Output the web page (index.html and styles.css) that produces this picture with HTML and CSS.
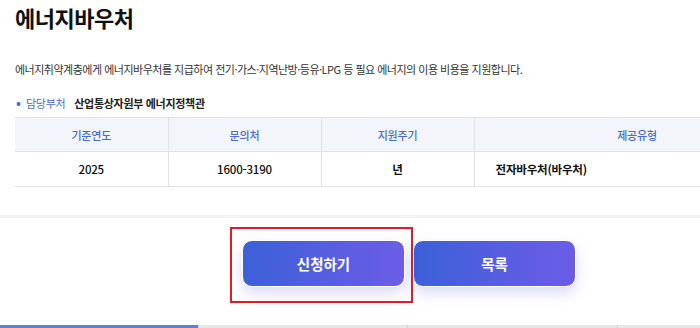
FILE: index.html
```html
<!DOCTYPE html>
<html lang="ko">
<head>
<meta charset="utf-8">
<link rel="stylesheet" href="styles.css">
</head>
<body>
<div class="page">
  <section class="intro">
    <h1 class="title">에너지바우처</h1>
    <p class="desc">에너지취약계층에게 에너지바우처를 지급하여 전기·가스·지역난방·등유·LPG 등 필요 에너지의 이용 비용을 지원합니다.</p>
    <div class="dept"><span class="dot">•</span><span class="dept-label">담당부처</span><span class="dept-name">산업통상자원부 에너지정책관</span></div>
    <div class="table-clip">
    <table class="info">
      <thead>
        <tr><th class="c1">기준연도</th><th class="c2">문의처</th><th class="c3">지원주기</th><th class="c4">제공유형</th></tr>
      </thead>
      <tbody>
        <tr><td>2025</td><td>1600-3190</td><td class="bold">년</td><td class="left bold">전자바우처(바우처)</td></tr>
      </tbody>
    </table>
    </div>
  </section>
  <div class="sep"></div>
  <div class="actions">
    <div class="btn-wrap">
      <button class="btn">신청하기</button>
      <span class="highlight"></span>
    </div>
    <button class="btn">목록</button>
  </div>
  <div class="tabs">
    <div class="tab active"></div>
    <div class="tab"></div>
    <div class="tab"></div>
    <div class="tab"></div>
  </div>
</div>
</body>
</html>
```

FILE: styles.css
```css
* { box-sizing: border-box; }
html, body { margin: 0; padding: 0; }
body {
  width: 700px;
  height: 328px;
  overflow: hidden;
  background: #fff;
  font-family: "Noto Sans CJK KR", "Noto Sans", sans-serif;
  color: #222;
}
.page { width: 700px; overflow: hidden; }
.intro { padding: 0 0 0 15px; }
.title {
  margin: 0;
  padding-top: 2px;
  font-size: 22px;
  line-height: 30px;
  font-weight: 700;
  color: #111;
  letter-spacing: -0.5px;
}
.desc {
  margin: 29px 0 0 0;
  font-size: 11px;
  line-height: 16px;
  color: #333;
  letter-spacing: -0.5px;
  white-space: nowrap;
}
.dept {
  margin-top: 18px;
  display: flex;
  align-items: center;
  font-size: 11px;
  line-height: 16px;
  letter-spacing: -0.3px;
}
.dot { color: #4a6ad6; width: 11px; padding-left: 1px; font-size: 13px; font-weight: 700; line-height: 16px; }
.dept-label { color: #4a6ad6; margin-right: 9px; }
.dept-name { font-weight: 700; color: #222; }
.table-clip { overflow: hidden; width: 685px; margin-top: 6px; }
.info {
  border-collapse: collapse;
  table-layout: fixed;
  width: 785px;
  font-size: 11px;
  letter-spacing: -0.2px;
}
.info th, .info td {
  border: 1px solid #e2e2e2;
  text-align: center;
  padding: 0;
}
.info tr > :first-child { border-left: none; }
.info th {
  height: 34px;
  background: #f4f5fa;
  color: #4a6ad6;
  font-weight: 500;
}
.info td { height: 35px; color: #111; font-size: 11.5px; font-weight: 500; }
.info td.bold { font-weight: 700; }
.info td.left { text-align: left; padding-left: 21px; }
.c1, .c2, .c3 { width: 153px; }
.c4 { width: 326px; }
.sep {
  margin-top: 28px;
  height: 3px;
  background: #f3f3f5;
}
.actions {
  display: flex;
  gap: 8px;
  padding: 22px 0 0 242px;
  height: 107px;
}
.btn-wrap { position: relative; }
.btn {
  width: 163px;
  height: 47px;
  border: 1.5px solid #fff;
  border-radius: 10px;
  background: linear-gradient(90deg, #3c60d8 0%, #6d5ce8 100%);
  color: #fff;
  font-family: inherit;
  font-size: 14.5px;
  font-weight: 700;
  box-shadow: 0 6px 14px rgba(90, 80, 210, 0.22);
  padding: 0;
}
.highlight {
  position: absolute;
  left: -12px;
  top: -13px;
  width: 183px;
  height: 76px;
  border: 2px solid #e31b23;
  pointer-events: none;
}
.tabs {
  display: flex;
  height: 3px;
}
.tab {
  flex: 0 0 auto;
  height: 3px;
  background: #e6e6e6;
  border-left: 1px solid #d0d0d0;
}
.tab:nth-child(1) { width: 198px; border-left: none; }
.tab:nth-child(2) { width: 209px; }
.tab:nth-child(3) { width: 210px; }
.tab:nth-child(4) { width: 83px; }
.tab.active { background: #5e7ee0; }
```
